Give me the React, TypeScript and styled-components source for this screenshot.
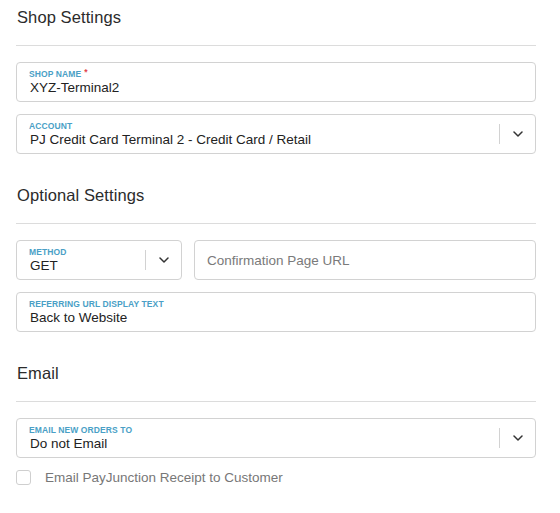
import React from 'react';
import styled, { createGlobalStyle } from 'styled-components';

const GlobalStyle = createGlobalStyle`
  html, body {
    margin: 0;
    padding: 0;
    background: #ffffff;
  }
  body {
    font-family: "Liberation Sans", Arial, sans-serif;
    color: #2b2b2b;
  }
`;

const Page = styled.div`
  width: 560px;
  box-sizing: border-box;
  padding: 7px 24px 20px 16px;
`;

const Section = styled.section`
  display: flex;
  flex-direction: column;
  & + & {
    margin-top: 31px;
  }
`;

const SectionTitle = styled.h2`
  margin: 0 0 0 1px;
  font-size: 16.5px;
  line-height: 20px;
  font-weight: 400;
  letter-spacing: 0.1px;
  color: #2b2b2b;
`;

const Divider = styled.hr`
  margin: 18px 0 16px;
  border: 0;
  border-top: 1px solid #dcdcdc;
  height: 0;
`;

const Fields = styled.div`
  display: flex;
  flex-direction: column;
  gap: 12px;
`;

const Row = styled.div`
  display: flex;
  gap: 12px;
`;

const Field = styled.div<{ $width?: number; $grow?: boolean }>`
  display: flex;
  align-items: stretch;
  box-sizing: border-box;
  height: 40px;
  flex: none;
  border: 1px solid #d2d2d2;
  border-radius: 4px;
  background: #fff;
  ${({ $width }) => ($width ? `width: ${$width}px;` : '')}
  ${({ $grow }) => ($grow ? 'flex: 1 1 0;' : '')}
`;

const FieldBody = styled.div`
  flex: 1;
  min-width: 0;
  display: flex;
  flex-direction: column;
  justify-content: center;
  padding: 0 12px;
`;

const Label = styled.div`
  font-size: 8.5px;
  line-height: 10px;
  font-weight: 700;
  text-transform: uppercase;
  letter-spacing: 0.1px;
  color: #4a9fc6;
`;

const Required = styled.span`
  color: #e2444a;
  margin-left: 3px;
  position: relative;
  top: -2px;
`;

const Value = styled.div`
  font-size: 13.5px;
  line-height: 17px;
  color: #222;
  padding-left: 1px;
  white-space: nowrap;
  overflow: hidden;
`;

const Placeholder = styled.div`
  font-size: 13.5px;
  color: #7a7a7a;
`;

const Indicator = styled.div`
  flex: none;
  width: 35px;
  display: flex;
  align-items: center;
  justify-content: center;
  margin: 9px 0;
  border-left: 1px solid #d2d2d2;
  color: #333;
`;

const CheckRow = styled.label`
  display: flex;
  align-items: center;
  gap: 14px;
  font-size: 13.5px;
  color: #777;
`;

const Box = styled.span`
  width: 15px;
  height: 15px;
  box-sizing: border-box;
  border: 1px solid #cfcfcf;
  border-radius: 3px;
  background: #fff;
`;

const Chevron = () => (
  <svg width="10" height="6" viewBox="0 0 10 6" fill="none">
    <path d="M1 1l4 4 4-4" stroke="currentColor" strokeWidth="1.5" strokeLinecap="round" strokeLinejoin="round" />
  </svg>
);

const App: React.FC = () => {
  return (
    <Page>
      <GlobalStyle />
      <Section>
        <SectionTitle>Shop Settings</SectionTitle>
        <Divider />
        <Fields>
          <Field>
            <FieldBody>
              <Label>
                Shop Name<Required>*</Required>
              </Label>
              <Value>XYZ-Terminal2</Value>
            </FieldBody>
          </Field>
          <Field>
            <FieldBody>
              <Label>Account</Label>
              <Value>PJ Credit Card Terminal 2 - Credit Card / Retail</Value>
            </FieldBody>
            <Indicator>
              <Chevron />
            </Indicator>
          </Field>
        </Fields>
      </Section>

      <Section>
        <SectionTitle>Optional Settings</SectionTitle>
        <Divider />
        <Fields>
          <Row>
            <Field $width={166}>
              <FieldBody>
                <Label>Method</Label>
                <Value>GET</Value>
              </FieldBody>
              <Indicator>
                <Chevron />
              </Indicator>
            </Field>
            <Field $grow>
              <FieldBody>
                <Placeholder>Confirmation Page URL</Placeholder>
              </FieldBody>
            </Field>
          </Row>
          <Field>
            <FieldBody>
              <Label>Referring URL Display Text</Label>
              <Value>Back to Website</Value>
            </FieldBody>
          </Field>
        </Fields>
      </Section>

      <Section>
        <SectionTitle>Email</SectionTitle>
        <Divider />
        <Fields>
          <Field>
            <FieldBody>
              <Label>Email New Orders To</Label>
              <Value>Do not Email</Value>
            </FieldBody>
            <Indicator>
              <Chevron />
            </Indicator>
          </Field>
          <CheckRow>
            <Box />
            Email PayJunction Receipt to Customer
          </CheckRow>
        </Fields>
      </Section>
    </Page>
  );
};

export default App;
